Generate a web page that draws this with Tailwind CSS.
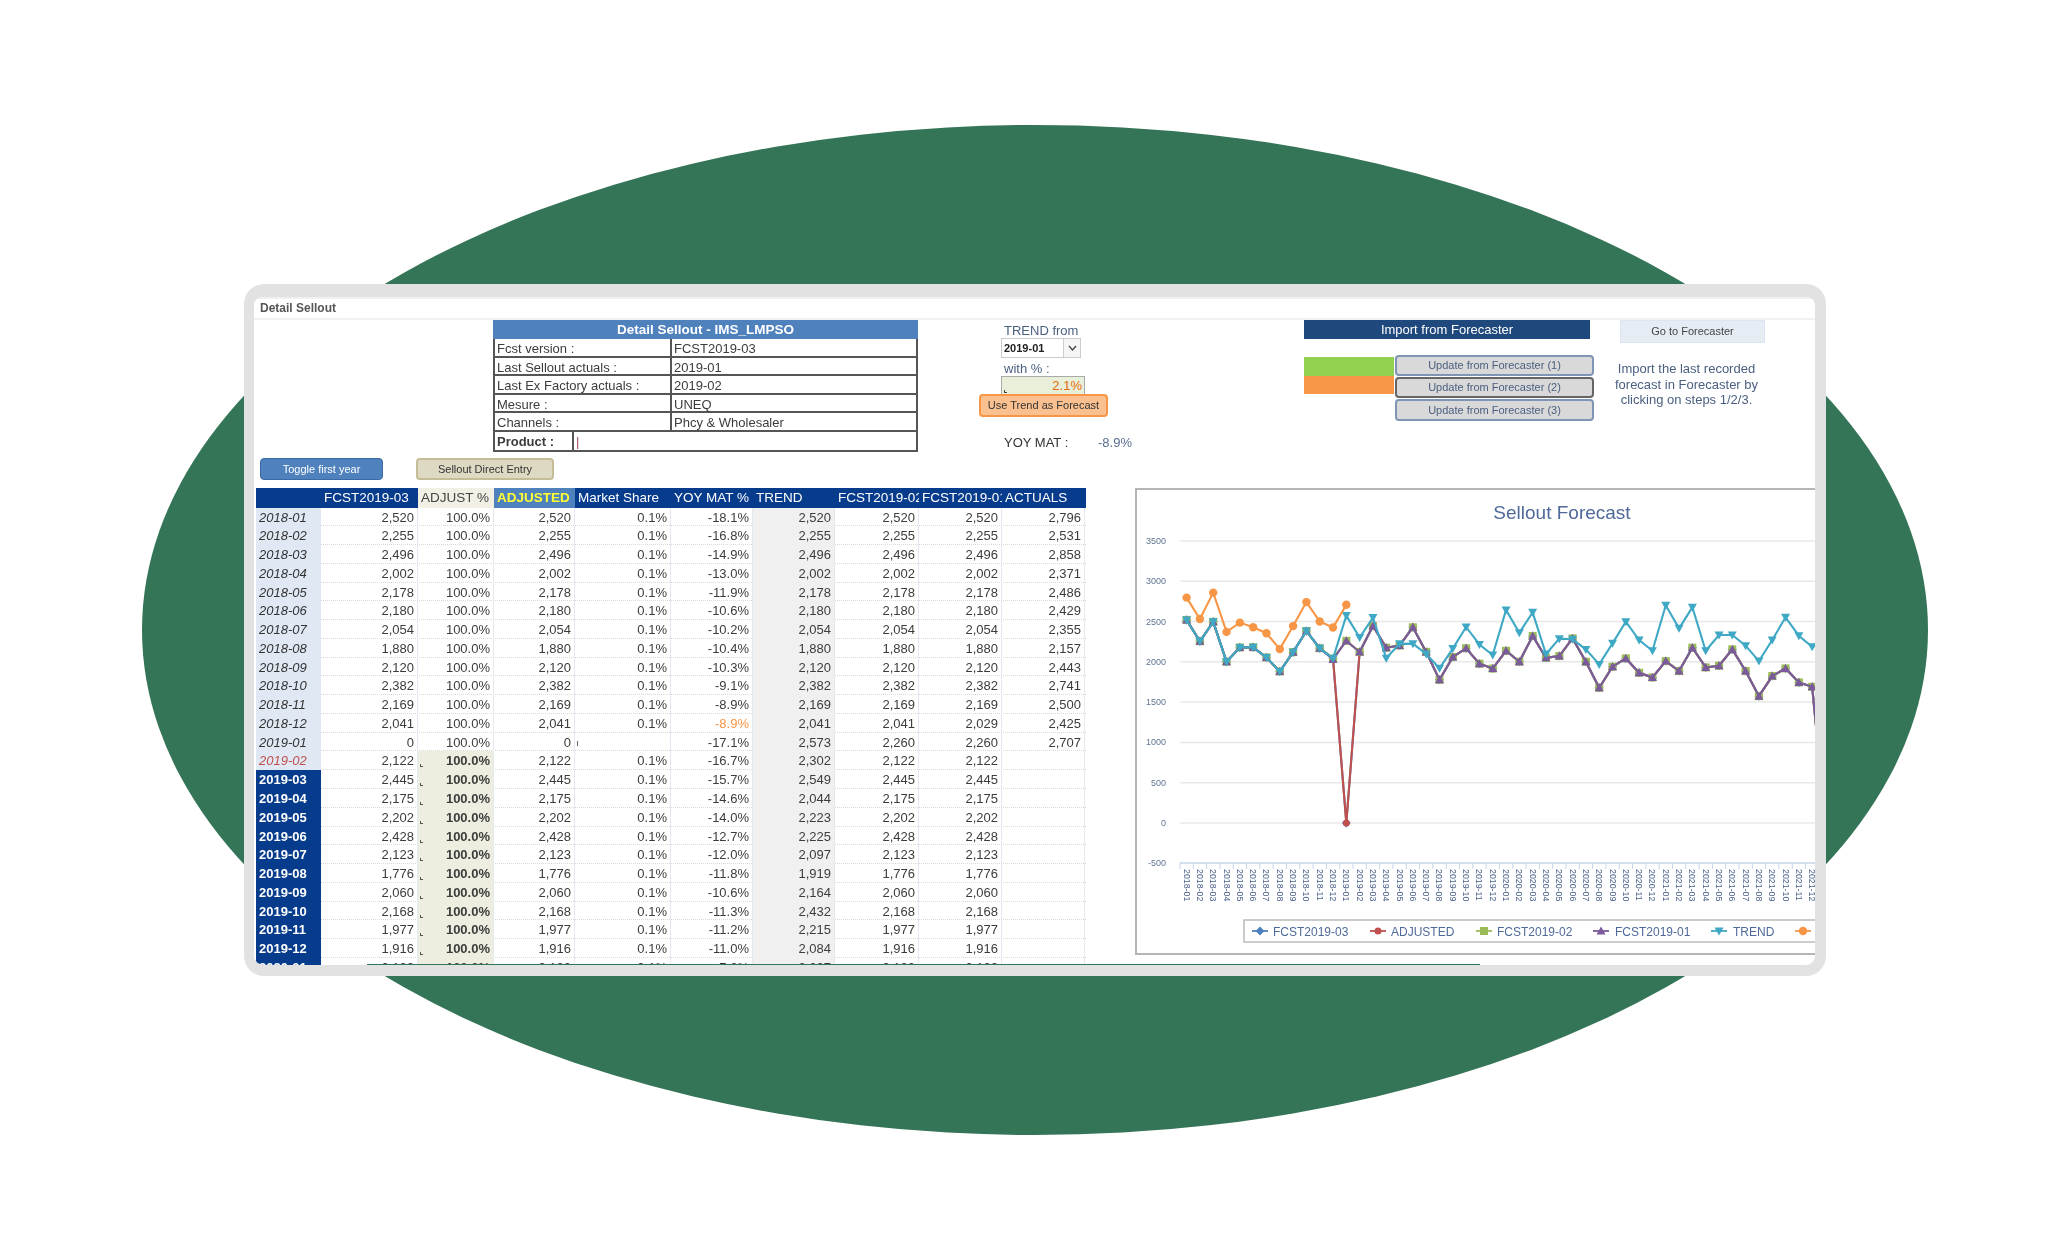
<!DOCTYPE html>
<html lang="en">
<head>
    <meta charset="UTF-8">
    <title>Detail Sellout</title>
    <script src="https://cdn.jsdelivr.net/npm/@tailwindcss/browser@4"></script>
</head>
<body class="bg-white font-['Liberation_Sans',Arial,sans-serif]">
    <div class="relative w-[2071px] h-[1259px] overflow-hidden pt-[284px] pl-[244px]">
        <!-- Green backdrop -->
        <div class="absolute left-[142px] top-[125px] w-[1786px] h-[1010px] rounded-[50%] bg-[#357557]"></div>

        <!-- Card -->
        <div class="relative w-[1582px] h-[692px] bg-white rounded-[20px] border-[#e2e2e2] border-l-[10px] border-r-[11px] border-t-[13px] border-b-[11px] overflow-hidden">
            <div class="h-full overflow-hidden blur-[0.5px] border-t-2 border-[#f0f0f0]">
                <div class="h-[21px] border-b-2 border-[#f1f1f1] pl-[6px] text-[12px] font-bold leading-[18px] text-[#555]">Detail Sellout</div>

                <!-- Top section -->
                <div class="flex h-[168px] text-[13px] text-[#3c3c3c]">
                    <div class="w-[664px] shrink-0">
                        <div class="ml-[239px] w-[425px] h-[132px]">
                            <div class="h-[19px] bg-[#4f81bd] text-center text-[13.5px] font-bold leading-[19px] text-white">Detail Sellout - IMS_LMPSO</div>
                            <div class="border-2 border-t-0 border-[#555]" id="infoRows"></div>
                        </div>
                        <div class="flex mt-[6px] ml-[6px] gap-[33px] text-[11px]">
                            <div class="w-[123px] h-[22px] rounded bg-[#4f81bd] border border-[#3a6aa5] text-white text-center leading-[20px]">Toggle first year</div>
                            <div class="w-[138px] h-[22px] rounded bg-[#ddd9c3] border-2 border-[#c4bd97] text-[#333] text-center leading-[18px]">Sellout Direct Entry</div>
                        </div>
                    </div>

                    <!-- Trend -->
                    <div class="ml-[61px] w-[129px] shrink-0 pt-[2px]">
                        <div class="h-4 ml-[25px] leading-[18px] text-[#4a5f80]">TREND from</div>
                        <div class="ml-[22px] w-[80px] h-5 flex border border-[#ccc] text-[11px] font-bold text-[#222]">
                            <div class="flex-1 pl-[2px] leading-[18px]">2019-01</div>
                            <div class="w-[17px] border-l border-[#ccc] flex items-center justify-center bg-[#f5f5f5]">
                                <svg width="9" height="6" viewBox="0 0 9 6"><path d="M1 1 L4.5 5 L8 1" fill="none" stroke="#444" stroke-width="1.3"/></svg>
                            </div>
                        </div>
                        <div class="mt-[3px] h-[15px] ml-[25px] leading-[15px] text-[#4a5f80]">with % :</div>
                        <div class="relative ml-[22px] w-[84px] h-[18px] bg-[#e9f0d9] border border-[#aaa] border-b-0 pr-[2px] text-right leading-[18px] text-[#e46c0a]">2.1%
                            <span class="absolute left-[2px] bottom-[1px] w-[3px] h-[3px] border-l border-b border-[#444]"></span>
                        </div>
                        <div class="w-[129px] h-[23px] rounded bg-[#fac090] border-2 border-[#f79646] text-center text-[11px] leading-[19px] text-[#333]">Use Trend as Forecast</div>
                        <div class="flex mt-[17px] ml-[25px] h-[18px] leading-[18px] whitespace-nowrap">
                            <div class="w-[94px] shrink-0 text-[#333]">YOY MAT :</div>
                            <div class="shrink-0 text-[#5a6f90]">-8.9%</div>
                        </div>
                    </div>

                    <!-- Import -->
                    <div class="ml-[196px] w-[290px] shrink-0">
                        <div class="w-[286px] h-[19px] bg-[#1f497d] text-center text-white text-[13px] leading-[19px]">Import from Forecaster</div>
                        <div class="flex mt-[16px]">
                            <div class="w-[90px] pt-[2px]">
                                <div class="h-[19px] bg-[#92d050]"></div>
                                <div class="h-[18px] bg-[#f79646]"></div>
                            </div>
                            <div class="ml-px w-[199px] flex flex-col gap-px text-[11px] text-center text-[#4a5f80]">
                                <div class="h-[21px] rounded bg-[#d9d9d9] border-2 border-[#7f95b5] leading-[17px]">Update from Forecaster (1)</div>
                                <div class="h-[21px] rounded bg-[#d9d9d9] border-2 border-[#666] leading-[17px]">Update from Forecaster (2)</div>
                                <div class="h-[22px] rounded bg-[#d9d9d9] border-2 border-[#7f95b5] leading-[18px]">Update from Forecaster (3)</div>
                            </div>
                        </div>
                    </div>

                    <!-- Go to forecaster -->
                    <div class="ml-[12px] w-[161px] shrink-0">
                        <div class="ml-[14px] w-[145px] h-[23px] bg-[#e6ecf4] border border-[#dce5f0] text-center text-[11px] leading-[20px] text-[#444]">Go to Forecaster</div>
                        <div class="mt-[18px] text-center leading-[15.5px] text-[#4a5f80]">Import the last recorded<br>forecast in Forecaster by<br>clicking on steps 1/2/3.</div>
                    </div>
                </div>

                <!-- Table and chart -->
                <div class="flex items-start">
                    <div class="ml-[2px] w-[830px] shrink-0">
                        <div class="grid grid-cols-[65px_97px_76px_81px_96px_82px_82px_84px_83px_83px] h-[19.5px] bg-[#073c8c] text-[13.5px] leading-[19.5px] text-white whitespace-nowrap">
                            <div></div>
                            <div class="pl-[3px] overflow-hidden">FCST2019-03</div>
                            <div class="pl-[3px] overflow-hidden bg-[#f2f0e4] text-[#444]">ADJUST %</div>
                            <div class="pl-[3px] overflow-hidden bg-[#4f81bd] font-bold text-[#ffff33]">ADJUSTED</div>
                            <div class="pl-[3px] overflow-hidden">Market Share</div>
                            <div class="pl-[3px] overflow-hidden">YOY MAT %</div>
                            <div class="pl-[3px] overflow-hidden">TREND</div>
                            <div class="pl-[3px] overflow-hidden">FCST2019-02</div>
                            <div class="pl-[3px] overflow-hidden">FCST2019-01</div>
                            <div class="pl-[3px] overflow-hidden">ACTUALS</div>
                        </div>
                        <div id="rows" class="text-[13px] text-[#3c3c3c]"></div>
                    </div>

                    <!-- Chart -->
                    <div class="ml-[49px] shrink-0 w-[700px] h-[467px] border-2 border-r-0 border-[#b5b5b5] bg-white overflow-hidden">
                        <svg id="chart" width="700" height="463" viewBox="1137 490 700 463" class="font-['Liberation_Sans',Arial,sans-serif]"></svg>
                    </div>
                </div>
            </div>
            <div class="absolute left-[113px] bottom-0 w-[1113px] h-px bg-[#357557]"></div>
        </div>
    </div>

    <script>
        // Header info box
        const info = [
            ['Fcst version :', 'FCST2019-03'],
            ['Last Sellout actuals :', '2019-01'],
            ['Last Ex Factory actuals :', '2019-02'],
            ['Mesure :', 'UNEQ'],
            ['Channels :', 'Phcy & Wholesaler']
        ];
        document.getElementById('infoRows').innerHTML = info.map(([a, b]) => `
            <div class="flex h-[18.6px] border-b-2 border-[#555] leading-[19px]">
                <div class="w-[177px] pl-[2px] border-r-2 border-[#555]">${a}</div>
                <div class="pl-[2px]">${b.replace('&', '&amp;')}</div>
            </div>`).join('') + `
            <div class="flex h-[18px] leading-[19px]">
                <div class="w-[79px] pl-[2px] border-r-2 border-[#555] font-bold">Product :</div>
                <div class="pl-[2px] text-[#a05060]">|</div>
            </div>`;

        // date, fcst03, adjusted, yoy, trend, fcst02, fcst01, actuals
        const data = [
            ['2018-01',2520,2520,-18.1,2520,2520,2520,2796],
            ['2018-02',2255,2255,-16.8,2255,2255,2255,2531],
            ['2018-03',2496,2496,-14.9,2496,2496,2496,2858],
            ['2018-04',2002,2002,-13.0,2002,2002,2002,2371],
            ['2018-05',2178,2178,-11.9,2178,2178,2178,2486],
            ['2018-06',2180,2180,-10.6,2180,2180,2180,2429],
            ['2018-07',2054,2054,-10.2,2054,2054,2054,2355],
            ['2018-08',1880,1880,-10.4,1880,1880,1880,2157],
            ['2018-09',2120,2120,-10.3,2120,2120,2120,2443],
            ['2018-10',2382,2382,-9.1,2382,2382,2382,2741],
            ['2018-11',2169,2169,-8.9,2169,2169,2169,2500],
            ['2018-12',2041,2041,-8.9,2041,2041,2029,2425],
            ['2019-01',0,0,-17.1,2573,2260,2260,2707],
            ['2019-02',2122,2122,-16.7,2302,2122,2122,null],
            ['2019-03',2445,2445,-15.7,2549,2445,2445,null],
            ['2019-04',2175,2175,-14.6,2044,2175,2175,null],
            ['2019-05',2202,2202,-14.0,2223,2202,2202,null],
            ['2019-06',2428,2428,-12.7,2225,2428,2428,null],
            ['2019-07',2123,2123,-12.0,2097,2123,2123,null],
            ['2019-08',1776,1776,-11.8,1919,1776,1776,null],
            ['2019-09',2060,2060,-10.6,2164,2060,2060,null],
            ['2019-10',2168,2168,-11.3,2432,2168,2168,null],
            ['2019-11',1977,1977,-11.2,2215,1977,1977,null],
            ['2019-12',1916,1916,-11.0,2084,1916,1916,null],
            ['2020-01',2122,2122,-7.6,2627,2122,2122,null]
        ];
        const fmt = n => n === null ? '' : n.toLocaleString('en-US');
        const cell = 'pr-[3px] text-right border-r border-[#e3e9f1]';

        document.getElementById('rows').innerHTML = data.map((r, i) => {
            const dateCls = i < 13 ? 'bg-[#dfe8f3] italic text-[#333]'
                : i === 13 ? 'bg-[#dfe8f3] italic text-[#c0504d]'
                : 'bg-[#073c8c] text-white font-bold';
            const future = i >= 13;
            const adjCls = future ? 'bg-[#eeeee0] font-bold' : '';
            const yoyCls = i === 11 ? 'text-[#f79646]' : '';
            const corner = future ? '<span class="absolute left-[2px] bottom-[3px] w-[3px] h-[3px] border-l border-b border-[#555]"></span>' : '';
            return `<div class="grid grid-cols-[65px_97px_76px_81px_96px_82px_82px_84px_83px_83px] h-[18.78px] leading-[19px] border-b border-dotted border-[#d9d9d9]">
                <div class="pl-[3px] ${dateCls}">${r[0]}</div>
                <div class="${cell}">${fmt(r[1])}</div>
                <div class="relative ${cell} ${adjCls}">100.0%${corner}</div>
                <div class="${cell}">${fmt(r[2])}</div>
                <div class="relative ${cell}">${i === 12 ? '<span class="absolute left-[2px] top-[8px] w-px h-[5px] bg-[#666]"></span>' : '0.1%'}</div>
                <div class="${cell} ${yoyCls}">${r[3].toFixed(1)}%</div>
                <div class="${cell} bg-[#f0f0f0]">${fmt(r[4])}</div>
                <div class="${cell}">${fmt(r[5])}</div>
                <div class="${cell}">${fmt(r[6])}</div>
                <div class="${cell}">${fmt(r[7])}</div>
            </div>`;
        }).join('');

        // Chart: coordinates below are page pixels, the viewBox maps them in
        const X0 = 1186.6, DX = 13.31, Y0 = 823, PER = 40.3 / 500;
        const px = i => X0 + i * DX;
        const py = v => Y0 - v * PER;

        const fc = [2137,2001,2320,2050,2071,2290,2000,1677,1939,2042,1864,1806,2009,1885,2175,1930,1951,2154,1885,1574,1823,1918,1744,1690,0];
        const tr = [2643,2361,2614,2096,2287,2279,2154,1968,2229,2498,2270,2137,2701,2415,2676,2137,2332,2332,2200,2009,2270,2552,2324,2187,2350];

        const pick = k => data.slice(0, 24).map(r => r[k]).concat(fc);
        const series = [
            { color: '#4f81bd', values: pick(1), mark: 'diamond' },
            { color: '#c0504d', values: pick(2), mark: 'circle' },
            { color: '#9bbb59', values: pick(5), mark: 'square' },
            { color: '#7a5a9a', values: pick(6), mark: 'tri' },
            { color: '#3fa8c4', values: data.slice(0, 24).map(r => r[4]).concat(tr), mark: 'tridown' },
            { color: '#f79646', values: data.slice(0, 13).map(r => r[7]), mark: 'dot' }
        ];

        function marker(kind, x, y, color) {
            if (kind === 'diamond') return `<path d="M${x} ${y-4.5}L${x+4.5} ${y}L${x} ${y+4.5}L${x-4.5} ${y}Z" fill="${color}"/>`;
            if (kind === 'circle') return `<circle cx="${x}" cy="${y}" r="3.5" fill="${color}"/>`;
            if (kind === 'square') return `<rect x="${x-4}" y="${y-4}" width="8" height="8" fill="${color}"/>`;
            if (kind === 'tri') return `<path d="M${x} ${y-4.5}L${x+4.5} ${y+3.5}L${x-4.5} ${y+3.5}Z" fill="${color}"/>`;
            if (kind === 'tridown') return `<path d="M${x-4.5} ${y-3.5}L${x+4.5} ${y-3.5}L${x} ${y+4.5}Z" fill="${color}"/>`;
            return `<circle cx="${x}" cy="${y}" r="4.2" fill="${color}"/>`;
        }

        let svg = '';
        svg += `<text x="1562" y="519" text-anchor="middle" font-size="19" fill="#4f6a9a">Sellout Forecast</text>`;

        for (let v = 3500; v >= -500; v -= 500) {
            const y = py(v);
            if (v > -500) svg += `<line x1="1180.5" x2="1840" y1="${y}" y2="${y}" stroke="#e8e8e8" stroke-width="1.5"/>`;
            svg += `<text x="1166" y="${y + 3}" text-anchor="end" font-size="9" fill="#5f7590">${v}</text>`;
        }

        // x axis
        svg += `<line x1="1180" x2="1840" y1="863" y2="863" stroke="#c6d5e8" stroke-width="1.5"/>`;
        for (let i = 0; i < 50; i++) {
            const x = 1180 + i * DX;
            svg += `<line x1="${x}" x2="${x}" y1="863" y2="869" stroke="#c6d5e8"/>`;
        }
        for (let i = 0; i < 49; i++) {
            const year = 2018 + Math.floor(i / 12);
            const month = String(i % 12 + 1).padStart(2, '0');
            const x = px(i) - 3;
            svg += `<text transform="translate(${x} 869) rotate(90)" font-size="8.8" fill="#4a6088">${year}-${month}</text>`;
        }

        series.forEach(s => {
            const pts = s.values.map((v, i) => `${px(i)},${py(v)}`).join(' ');
            svg += `<polyline points="${pts}" fill="none" stroke="${s.color}" stroke-width="2.1"/>`;
            s.values.forEach((v, i) => { svg += marker(s.mark, px(i), py(v), s.color); });
        });

        // Legend
        svg += `<rect x="1244" y="920" width="620" height="22" fill="#fff" stroke="#bbb" stroke-width="1.5"/>`;
        const legend = [
            ['FCST2019-03', 1260, 1273, '#4f81bd', 'diamond'],
            ['ADJUSTED', 1378, 1391, '#c0504d', 'circle'],
            ['FCST2019-02', 1484, 1497, '#9bbb59', 'square'],
            ['FCST2019-01', 1601, 1615, '#7a5a9a', 'tri'],
            ['TREND', 1719, 1733, '#3fa8c4', 'tridown'],
            ['ACTUALS', 1803, 1817, '#f79646', 'dot']
        ];
        legend.forEach(([label, mx, tx, color, kind]) => {
            svg += `<line x1="${mx - 8}" x2="${mx + 8}" y1="931" y2="931" stroke="${color}" stroke-width="1.8"/>`;
            svg += marker(kind, mx, 931, color);
            svg += `<text x="${tx}" y="935.5" font-size="12" fill="#4f6a9a">${label}</text>`;
        });

        document.getElementById('chart').innerHTML = svg;
    </script>
</body>
</html>
